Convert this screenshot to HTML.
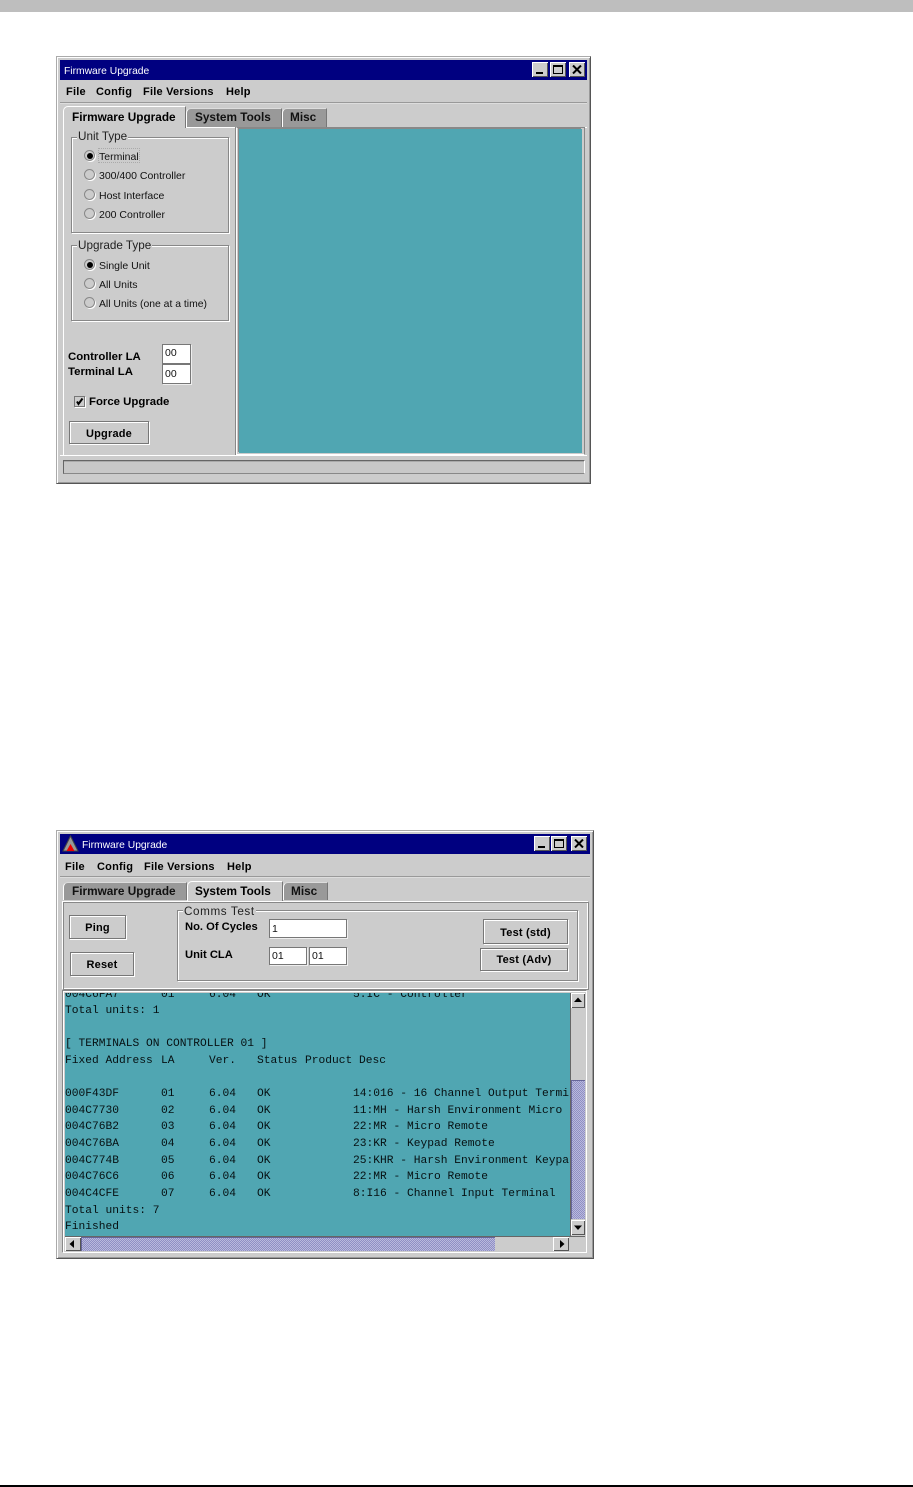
<!DOCTYPE html>
<html><head><meta charset="utf-8"><style>
html,body{margin:0;padding:0;background:#fff}
body{position:relative;width:913px;height:1487px;overflow:hidden;font-family:"Liberation Sans",sans-serif;color:#000}
div,span{position:absolute;box-sizing:border-box}
.t{white-space:pre;line-height:14px;height:14px;font-size:10.5px;color:#111;margin-top:1px}
.b{font-weight:bold;font-size:11px;color:#000;margin-top:0}
.menu{letter-spacing:.22px;margin-top:0}
.tb{font-size:11.8px!important}
.win{background:#ccc;border:1px solid #aaa;border-right-color:#555;border-bottom-color:#555;box-shadow:inset 1px 1px 0 #fff,inset -1px -1px 0 #999}
.title{background:#000080}
.tt{color:#fff;font-size:10.5px;white-space:pre;line-height:14px}
.wb{width:16px;height:15px;background:#ccc;box-shadow:inset 1px 1px 0 #fff,inset -1px -1px 0 #555}
.sep{height:2px;background:#999;border-bottom:1px solid #ddd}
.tab{background:#ccc;border-top:1px solid #fff;border-left:1px solid #fff;border-right:1px solid #777;border-top-left-radius:5px}
.tab.off{background:#999;border-top-color:#ddd}
.etch{border:1px solid #888;box-shadow:1px 1px 0 #fff,inset 1px 1px 0 #fff}
.leg{background:#ccc;font-size:11.7px;line-height:12px;padding:0 1px;white-space:pre;color:#222}
.r{width:11px;height:11px;border-radius:50%;background:#ccc;border:1px solid #888;box-shadow:1px 1px 0 #fff}
.r.on::after{content:"";position:absolute;left:1.5px;top:1.5px;width:6px;height:6px;border-radius:50%;background:#000}
.btn{background:#ccc;border:1px solid #777;box-shadow:1px 1px 0 #fff,inset 1px 1px 0 #fff;text-align:center;font-weight:bold;font-size:11px;color:#000;letter-spacing:.2px}
.in{background:#fff;border:1px solid #777;box-shadow:1px 1px 0 #eee;font-size:10.5px;padding-left:2px;color:#111}
.teal{background:#50a6b2}
.m{font-family:"Liberation Mono",monospace;font-size:11.25px;line-height:14px;height:14px;white-space:pre;color:#061012;margin-top:0}
.dith{background:repeating-conic-gradient(#8f8fc4 0 25%,#b9b9dd 0 50%) 0 0/2px 2px;box-shadow:inset 1px 1px 0 #66669a}
.sb{background:#ccc;box-shadow:inset 1px 1px 0 #fff,inset -1px -1px 0 #555}
</style></head><body>
<div style="left:0;top:0;width:913px;height:12px;background:#bebebe"></div>
<div style="left:0;top:1485px;width:913px;height:2px;background:#000"></div>

<!-- WINDOW 1 -->
<div class="win" style="left:56px;top:56px;width:535px;height:428px"></div>
<div class="title" style="left:60px;top:60px;width:527px;height:20px"></div>
<div class="tt" style="left:64px;top:64px;font-size:10.3px;margin-top:1px">Firmware Upgrade</div>
<div class="wb" style="left:532px;top:62px"><div style="left:4px;top:10px;width:7px;height:2px;background:#000"></div></div>
<div class="wb" style="left:550px;top:62px"><div style="left:3px;top:3px;width:10px;height:9px;border:1px solid #000;border-top-width:2px"></div></div>
<div class="wb" style="left:569px;top:62px"><svg style="position:absolute;left:3px;top:3px" width="10" height="9"><path d="M1 0.5L9 8.5M9 0.5L1 8.5" stroke="#000" stroke-width="2"/></svg></div>
<div class="t b menu" style="left:66px;top:85px">File</div>
<div class="t b menu" style="left:96px;top:85px">Config</div>
<div class="t b menu" style="left:143px;top:85px">File Versions</div>
<div class="t b menu" style="left:226px;top:85px">Help</div>
<div class="sep" style="left:60px;top:102px;width:527px"></div>

<div class="tab off" style="left:186px;top:108px;width:96px;height:19px"></div>
<div class="tab off" style="left:282px;top:108px;width:45px;height:19px"></div>
<div class="tab" style="left:63px;top:106px;width:123px;height:22px"></div>
<div class="t b tb" style="left:72px;top:110px">Firmware Upgrade</div>
<div class="t b tb" style="left:195px;top:110px;color:#111">System Tools</div>
<div class="t b tb" style="left:290px;top:110px;color:#111">Misc</div>
<div style="left:186px;top:127px;width:401px;height:1px;background:#fff"></div>
<div style="left:63px;top:127px;width:1px;height:328px;background:#fff"></div>
<div style="left:64px;top:127px;width:172px;height:328px;border-right:1px solid #888"></div>
<div style="left:236px;top:127px;width:349px;height:328px;border:1px solid #fff;border-top-color:#888;border-left-color:#fff;border-right-color:#888;border-bottom-color:#fff"></div>
<div class="teal" style="left:239px;top:129px;width:343px;height:324px;box-shadow:-1px -1px 0 #888"></div>
<div style="left:60px;top:455px;width:527px;height:1px;background:#fff"></div>

<div class="etch" style="left:71px;top:137px;width:158px;height:96px"></div>
<div class="leg" style="left:77px;top:131px">Unit Type</div>
<div class="r on" style="left:84px;top:150px"></div>
<div style="left:98px;top:148px;width:42px;height:15px;border:1px dotted #aaa"></div>
<div class="t" style="left:99px;top:149px">Terminal</div>
<div class="r" style="left:84px;top:169px"></div><div class="t" style="left:99px;top:168px">300/400 Controller</div>
<div class="r" style="left:84px;top:189px"></div><div class="t" style="left:99px;top:188px">Host Interface</div>
<div class="r" style="left:84px;top:208px"></div><div class="t" style="left:99px;top:207px">200 Controller</div>

<div class="etch" style="left:71px;top:245px;width:158px;height:76px"></div>
<div class="leg" style="left:77px;top:240px">Upgrade Type</div>
<div class="r on" style="left:84px;top:259px"></div><div class="t" style="left:99px;top:258px">Single Unit</div>
<div class="r" style="left:84px;top:278px"></div><div class="t" style="left:99px;top:277px">All Units</div>
<div class="r" style="left:84px;top:297px"></div><div class="t" style="left:99px;top:297px;font-size:10.4px">All Units (one at a time)</div>

<div class="t b" style="left:68px;top:350px;font-size:11.4px">Controller LA</div>
<div class="t b" style="left:68px;top:365px;font-size:11.4px">Terminal LA</div>
<div class="in" style="left:162px;top:344px;width:29px;height:20px;line-height:17px">00</div>
<div class="in" style="left:162px;top:364px;width:29px;height:20px;line-height:19px">00</div>
<div style="left:74px;top:396px;width:11px;height:11px;background:#ccc;border:1px solid #777;box-shadow:1px 1px 0 #fff"><svg style="position:absolute;left:0;top:0" width="9" height="9"><path d="M2 4.500L3.500 7L7.500 1.500" stroke="#000" stroke-width="2" fill="none"/></svg></div>
<div class="t b" style="left:89px;top:395px;font-size:11.4px">Force Upgrade</div>
<div class="btn" style="left:69px;top:421px;width:80px;height:23px;line-height:24px">Upgrade</div>
<div style="left:63px;top:460px;width:522px;height:14px;border:1px solid #666;border-right-color:#fff;border-bottom-color:#888;box-shadow:inset 0 1px 0 #aaa;background:#c8c8c8"></div>

<!-- WINDOW 2 -->
<div class="win" style="left:56px;top:830px;width:538px;height:429px"></div>
<div class="title" style="left:60px;top:834px;width:530px;height:20px"></div>
<svg style="position:absolute;left:62px;top:835px" width="18" height="17"><path d="M8.500 1L1 16H16Z" fill="#999" stroke="#444" stroke-width="1"/><path d="M8.500 9L4.500 16H12.500Z" fill="#e00"/></svg>
<div class="tt" style="left:82px;top:839px;font-size:10.3px">Firmware Upgrade</div>
<div class="wb" style="left:534px;top:836px"><div style="left:4px;top:10px;width:7px;height:2px;background:#000"></div></div>
<div class="wb" style="left:551px;top:836px"><div style="left:3px;top:3px;width:10px;height:9px;border:1px solid #000;border-top-width:2px"></div></div>
<div class="wb" style="left:571px;top:836px"><svg style="position:absolute;left:3px;top:3px" width="10" height="9"><path d="M1 0.500L9 8.500M9 0.500L1 8.500" stroke="#000" stroke-width="2"/></svg></div>
<div class="t b menu" style="left:65px;top:860px">File</div>
<div class="t b menu" style="left:97px;top:860px">Config</div>
<div class="t b menu" style="left:144px;top:860px">File Versions</div>
<div class="t b menu" style="left:227px;top:860px">Help</div>
<div class="sep" style="left:60px;top:876px;width:530px"></div>

<div class="tab off" style="left:63px;top:882px;width:124px;height:18px"></div>
<div class="tab off" style="left:283px;top:882px;width:45px;height:18px"></div>
<div class="tab" style="left:187px;top:881px;width:96px;height:20px"></div>
<div class="t b tb" style="left:72px;top:884px;color:#111">Firmware Upgrade</div>
<div class="t b tb" style="left:195px;top:884px">System Tools</div>
<div class="t b tb" style="left:291px;top:884px;color:#111">Misc</div>
<div style="left:62px;top:901px;width:527px;height:89px;border:1px solid #fff;border-right-color:#888;border-bottom-color:#888;box-shadow:inset 1px 1px 0 #888,inset -1px -1px 0 #fff"></div>

<div class="btn" style="left:69px;top:915px;width:57px;height:24px;line-height:25px">Ping</div>
<div class="btn" style="left:70px;top:952px;width:64px;height:24px;line-height:25px">Reset</div>
<div class="etch" style="left:177px;top:910px;width:401px;height:71px"></div>
<div class="leg" style="left:183px;top:906px;letter-spacing:.6px">Comms Test</div>
<div class="t b" style="left:185px;top:920px;font-size:11.2px">No. Of Cycles</div>
<div class="t b" style="left:185px;top:948px;font-size:11.2px">Unit CLA</div>
<div class="in" style="left:269px;top:919px;width:78px;height:19px;line-height:18px">1</div>
<div class="in" style="left:269px;top:947px;width:38px;height:18px;line-height:17px">01</div>
<div class="in" style="left:309px;top:947px;width:38px;height:18px;line-height:17px">01</div>
<div class="btn" style="left:483px;top:919px;width:85px;height:25px;line-height:26px">Test (std)</div>
<div class="btn" style="left:480px;top:948px;width:88px;height:23px;line-height:23px">Test (Adv)</div>

<div style="left:62px;top:990px;width:525px;height:263px;border:1px solid #888;border-right-color:#fff;border-bottom-color:#fff;box-shadow:inset 1px 1px 0 #fff"></div>
<div class="teal" style="left:65px;top:993px;width:505px;height:243px;overflow:hidden;box-shadow:none">
<span class="m" style="left:0;top:-5px">004C6FA7</span><span class="m" style="left:96px;top:-5px">01</span><span class="m" style="left:144px;top:-5px">6.04</span><span class="m" style="left:192px;top:-5px">OK</span><span class="m" style="left:288px;top:-5px">5:IC - Controller</span>
<span class="m" style="left:0;top:11px">Total units: 1</span>
<span class="m" style="left:0;top:44px">[ TERMINALS ON CONTROLLER 01 ]</span>
<span class="m" style="left:0;top:61px">Fixed Address</span><span class="m" style="left:96px;top:61px">LA</span><span class="m" style="left:144px;top:61px">Ver.</span><span class="m" style="left:192px;top:61px">Status</span><span class="m" style="left:240px;top:61px">Product Desc</span>
<span class="m" style="left:0;top:94px">000F43DF</span><span class="m" style="left:96px;top:94px">01</span><span class="m" style="left:144px;top:94px">6.04</span><span class="m" style="left:192px;top:94px">OK</span><span class="m" style="left:288px;top:94px">14:016 - 16 Channel Output Termi</span>
<span class="m" style="left:0;top:111px">004C7730</span><span class="m" style="left:96px;top:111px">02</span><span class="m" style="left:144px;top:111px">6.04</span><span class="m" style="left:192px;top:111px">OK</span><span class="m" style="left:288px;top:111px">11:MH - Harsh Environment Micro</span>
<span class="m" style="left:0;top:127px">004C76B2</span><span class="m" style="left:96px;top:127px">03</span><span class="m" style="left:144px;top:127px">6.04</span><span class="m" style="left:192px;top:127px">OK</span><span class="m" style="left:288px;top:127px">22:MR - Micro Remote</span>
<span class="m" style="left:0;top:144px">004C76BA</span><span class="m" style="left:96px;top:144px">04</span><span class="m" style="left:144px;top:144px">6.04</span><span class="m" style="left:192px;top:144px">OK</span><span class="m" style="left:288px;top:144px">23:KR - Keypad Remote</span>
<span class="m" style="left:0;top:161px">004C774B</span><span class="m" style="left:96px;top:161px">05</span><span class="m" style="left:144px;top:161px">6.04</span><span class="m" style="left:192px;top:161px">OK</span><span class="m" style="left:288px;top:161px">25:KHR - Harsh Environment Keypa</span>
<span class="m" style="left:0;top:177px">004C76C6</span><span class="m" style="left:96px;top:177px">06</span><span class="m" style="left:144px;top:177px">6.04</span><span class="m" style="left:192px;top:177px">OK</span><span class="m" style="left:288px;top:177px">22:MR - Micro Remote</span>
<span class="m" style="left:0;top:194px">004C4CFE</span><span class="m" style="left:96px;top:194px">07</span><span class="m" style="left:144px;top:194px">6.04</span><span class="m" style="left:192px;top:194px">OK</span><span class="m" style="left:288px;top:194px">8:I16 - Channel Input Terminal</span>
<span class="m" style="left:0;top:211px">Total units: 7</span>
<span class="m" style="left:0;top:227px">Finished</span>
</div>
<!-- vertical scrollbar -->
<div style="left:570px;top:993px;width:15px;height:243px;background:#ccc;border-left:1px solid #666"></div>
<div class="sb" style="left:571px;top:993px;width:14px;height:15px"><svg style="position:absolute;left:2px;top:4px" width="10" height="6"><path d="M5 0.500L9 5H1Z" fill="#000"/></svg></div>
<div class="dith" style="left:571px;top:1080px;width:14px;height:139px"></div>
<div class="sb" style="left:571px;top:1220px;width:14px;height:15px"><svg style="position:absolute;left:2px;top:5px" width="10" height="6"><path d="M1 0.500H9L5 5Z" fill="#000"/></svg></div>
<!-- horizontal scrollbar -->
<div style="left:65px;top:1236px;width:520px;height:15px;background:#ccc;border-top:1px solid #666"></div>
<div class="sb" style="left:65px;top:1237px;width:16px;height:14px"><svg style="position:absolute;left:4px;top:2px" width="6" height="10"><path d="M0.500 5L5 1V9Z" fill="#000"/></svg></div>
<div class="dith" style="left:81px;top:1237px;width:414px;height:14px"></div>
<div class="sb" style="left:553px;top:1237px;width:16px;height:14px"><svg style="position:absolute;left:6px;top:2px" width="6" height="10"><path d="M1 1L5.500 5L1 9Z" fill="#000"/></svg></div>
</body></html>
